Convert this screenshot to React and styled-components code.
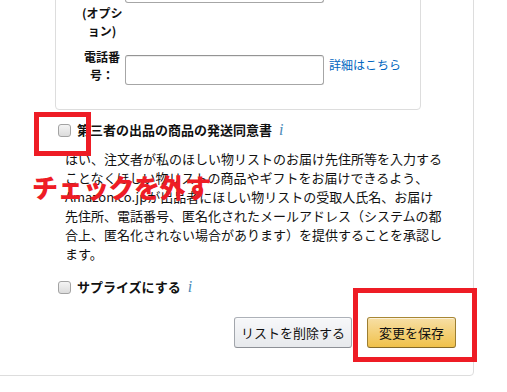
import React from "react";
import styled, { createGlobalStyle } from "styled-components";

const GlobalStyle = createGlobalStyle`
	html, body {
		margin: 0;
		padding: 0;
		background: #fff;
	}
	body {
		font-family: "Noto Sans CJK JP", "Noto Sans", sans-serif;
		color: #111;
	}
`;

const Frame = styled.div`
	position: relative;
	width: 507px;
	height: 392px;
	overflow: hidden;
	background: #fff;
`;

const Panel = styled.div`
	width: 494px;
	box-sizing: border-box;
	margin: -18px 0 0 -20px;
	padding: 10px 17px 27px 74px;
	border: 1px solid #ddd;
	border-radius: 0 0 4px 4px;
`;

const FieldBox = styled.div`
	width: 366px;
	box-sizing: border-box;
	padding: 10px 0 24px 26px;
	border: 1px solid #ddd;
	border-radius: 4px;
	display: flex;
	flex-direction: column;
	gap: 8px;
`;

const FieldRow = styled.div`
	display: flex;
	align-items: flex-start;
`;

const FieldLabel = styled.div`
	width: 40px;
	margin-right: 3px;
	font-size: 12px;
	font-weight: bold;
	line-height: 18px;
	text-align: center;
	white-space: nowrap;
	color: #111;
`;

const Input = styled.div`
	width: 199px;
	height: 30px;
	box-sizing: border-box;
	margin-top: ${(p) => p.$offset}px;
	border: 1px solid #a6a6a6;
	border-top-color: #949494;
	border-radius: 3px;
	background: #fff;
	box-shadow: 0 1px 0 rgba(255, 255, 255, 0.5), inset 0 1px 0 rgba(0, 0, 0, 0.07);
`;

const HelpLink = styled.a`
	margin: 8px 0 0 5px;
	font-size: 12px;
	line-height: 18px;
	color: #0066c0;
	text-decoration: none;
	white-space: nowrap;
`;

const Option = styled.div`
	margin-top: ${(p) => p.$gap}px;
`;

const OptionHead = styled.label`
	display: flex;
	align-items: center;
	padding-left: 3px;
	font-size: 13px;
	font-weight: bold;
	line-height: 18px;
`;

const Box = styled.span`
	width: 13px;
	height: 13px;
	box-sizing: border-box;
	margin-right: 6px;
	border: 1px solid #a3a3a3;
	border-radius: 3px;
	background: linear-gradient(#f4f4f4, #dcdcdc);
`;

const Info = styled.i`
	margin-left: 7px;
	font-family: "Liberation Serif", "DejaVu Serif", serif;
	font-size: 16px;
	font-weight: normal;
	color: #4b8ab8;
`;

const Consent = styled.p`
	width: 390px;
	margin: 10px 0 0 10px;
	font-size: 13px;
	line-height: 19px;
	color: #111;
`;

const Actions = styled.div`
	display: flex;
	justify-content: flex-end;
	gap: 15px;
	margin-top: 21px;
`;

const Button = styled.button`
	height: 31px;
	padding: 0 ${(p) => p.$pad}px;
	border: 1px solid;
	border-radius: 3px;
	font-family: "Noto Sans CJK JP", sans-serif;
	font-size: 13px;
	color: #111;
	cursor: pointer;
	border-color: ${(p) => (p.$primary ? "#a88734 #9c7e31 #846a29" : "#adb1b8 #a2a6ac #8d9096")};
	background: ${(p) =>
		p.$primary
			? "linear-gradient(#f7dfa5, #f0c14b)"
			: "linear-gradient(#f7f8fa, #e7e9ec)"};
	box-shadow: inset 0 1px 0 rgba(255, 255, 255, 0.6);
`;

const Callout = styled.div`
	position: absolute;
	left: ${(p) => p.$x}px;
	top: ${(p) => p.$y}px;
	width: ${(p) => p.$w}px;
	height: ${(p) => p.$h}px;
	box-sizing: border-box;
	border: 5px solid #ee1c25;
	pointer-events: none;
`;

const Note = styled.div`
	position: absolute;
	left: 32px;
	top: 168px;
	font-family: "Noto Sans CJK JP", sans-serif;
	font-size: 26px;
	font-weight: 900;
	line-height: 38px;
	letter-spacing: -0.5px;
	color: #ee1c25;
	white-space: nowrap;
`;

const consentLines = [
	"はい、注文者が私のほしい物リストのお届け先住所等を入力する",
	"ことなくほしい物リストの商品やギフトをお届けできるよう、",
	"Amazon.co.jpが出品者にほしい物リストの受取人氏名、お届け",
	"先住所、電話番号、匿名化されたメールアドレス（システムの都",
	"合上、匿名化されない場合があります）を提供することを承認し",
	"ます。",
];

const App = () => {
	return (
		<>
			<GlobalStyle />
			<Frame>
				<Panel>
					<FieldBox>
						<FieldRow>
							<FieldLabel>
								(オプシ
								<br />
								ョン)
							</FieldLabel>
							<Input $offset={-31} />
						</FieldRow>
						<FieldRow>
							<FieldLabel>
								電話番
								<br />
								号：
							</FieldLabel>
							<Input $offset={7} />
							<HelpLink href="#">詳細はこちら</HelpLink>
						</FieldRow>
					</FieldBox>

					<Option $gap={11}>
						<OptionHead>
							<Box />
							第三者の出品の商品の発送同意書
							<Info>i</Info>
						</OptionHead>
						<Consent>
							{consentLines.map((line, i) => (
								<React.Fragment key={i}>
									{line}
									{i < consentLines.length - 1 && <br />}
								</React.Fragment>
							))}
						</Consent>
					</Option>

					<Option $gap={15}>
						<OptionHead>
							<Box />
							サプライズにする
							<Info>i</Info>
						</OptionHead>
					</Option>

					<Actions>
						<Button $pad={6}>リストを削除する</Button>
						<Button $pad={11} $primary>
							変更を保存
						</Button>
					</Actions>
				</Panel>

				<Callout $x={34} $y={112} $w={57} $h={44} />
				<Note>チェックを外す</Note>
				<Callout $x={353} $y={288} $w={124} $h={74} />
			</Frame>
		</>
	);
};

export default App;
